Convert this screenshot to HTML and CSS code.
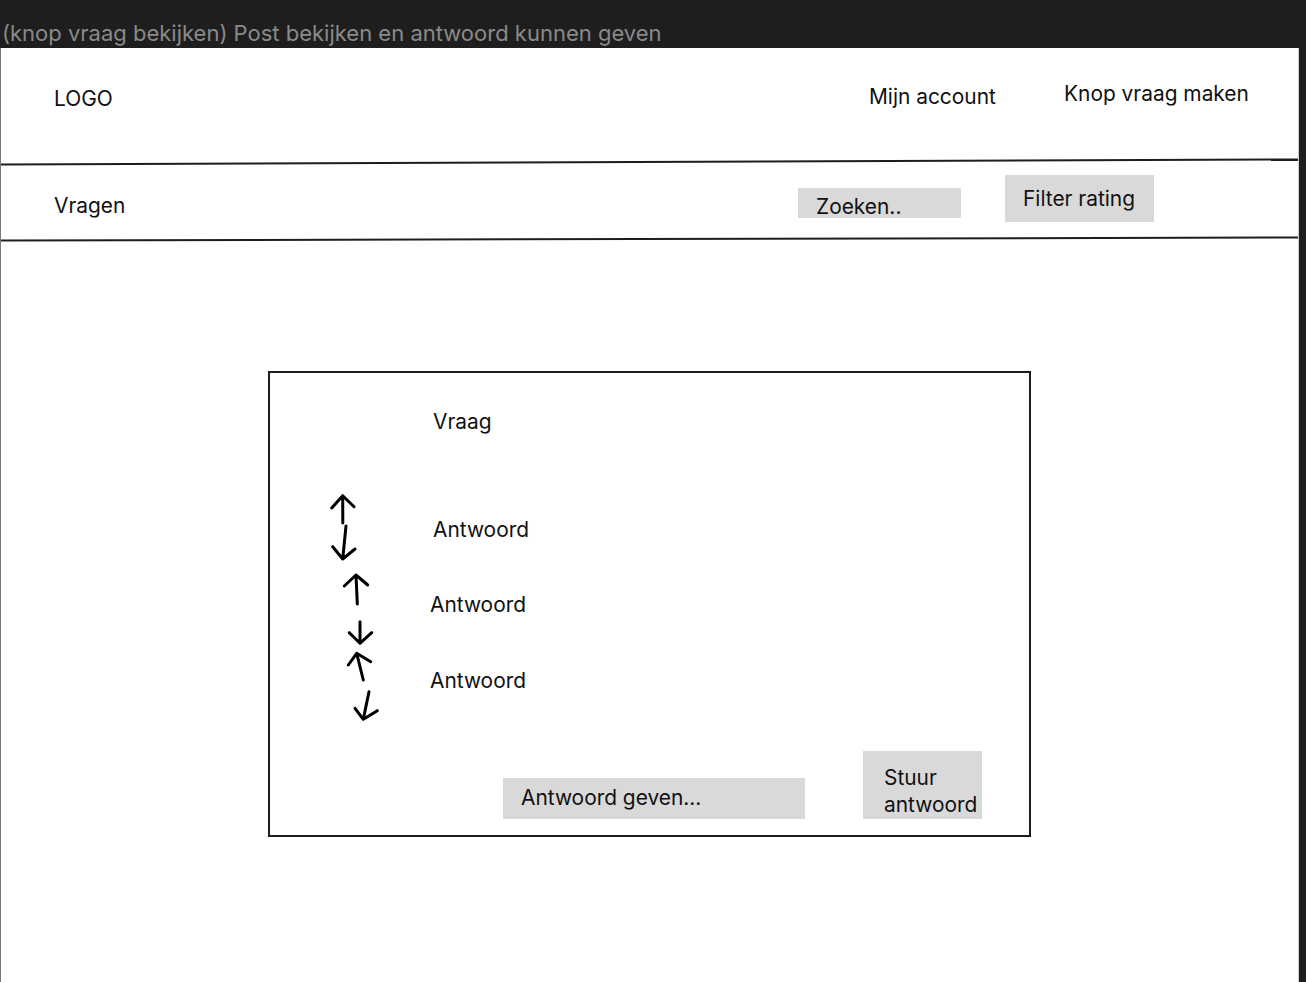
FILE: index.html
```html
<!DOCTYPE html>
<html lang="nl">
<head>
<meta charset="utf-8">
<title>Post bekijken</title>
<link rel="stylesheet" href="styles.css">
</head>
<body>
<div class="title">(knop vraag bekijken) Post bekijken en antwoord kunnen geven</div>
<main class="frame">
  <header class="topbar">
    <div class="logo">LOGO</div>
    <div class="account">Mijn account</div>
    <div class="make">Knop vraag maken</div>
  </header>
  <div class="rule rule-one"></div>
  <nav class="subbar">
    <div class="section">Vragen</div>
    <div class="search">Zoeken..</div>
    <div class="filter">Filter rating</div>
  </nav>
  <div class="rule rule-two"></div>
  <section class="content">
    <article class="card">
      <svg class="arrows" width="200" height="400" viewBox="270 373 200 400" fill="none" stroke="#000" stroke-width="3" stroke-linecap="round" stroke-linejoin="round">
        <path d="M342.7 496 L342.8 523 M331.7 508 L342.7 495.7 L354 506.7"/>
        <path d="M346 526 L342.7 559 M332.7 546.7 L342.7 559 L355 549"/>
        <path d="M356 575 L357.3 604 M344.3 586 L356 575 L367.7 585"/>
        <path d="M360 621.7 L360 643.3 M349.3 632.7 L360 643.3 L371.7 632.7"/>
        <path d="M356.7 653.3 L363.3 680 M348.3 665 L356.7 653.3 L370.7 661.7"/>
        <path d="M369 691.7 L363.3 719.3 M355 708.3 L363.3 719.3 L377.3 710.7"/>
      </svg>
      <div class="question">Vraag</div>
      <ul class="answers">
        <li class="answer a1">Antwoord</li>
        <li class="answer a2">Antwoord</li>
        <li class="answer a3">Antwoord</li>
      </ul>
      <div class="reply">
        <div class="reply-input">Antwoord geven...</div>
        <div class="reply-send">Stuur<br>antwoord</div>
      </div>
    </article>
  </section>
</main>
</body>
</html>
```

FILE: styles.css
```css
html, body {
  margin: 0;
  padding: 0;
}

body {
  background: #1e1e1e;
  font-family: Inter, "Noto Sans", "Liberation Sans", sans-serif;
  font-size: 20.9px;
  line-height: 24px;
  color: #111;
  width: 1306px;
  height: 982px;
  overflow: hidden;
}

.title {
  height: 48px;
  box-sizing: border-box;
  padding: 21px 0 0 2px;
  color: #8a8a8a;
  font-size: 22px;
  line-height: 24px;
  white-space: nowrap;
}

.frame {
  width: 1299px;
  height: 934px;
  box-sizing: border-box;
  background: #fff;
  border-left: 1px solid #7a7a7a;
  border-right: 1px solid #d0d0d0;
  overflow: hidden;
}

.topbar {
  height: 113px;
  box-sizing: border-box;
  display: grid;
  grid-template-columns: 815px 195px auto;
  padding-left: 53px;
}

.logo {
  margin-top: 39px;
}

.account {
  margin-top: 37px;
}

.make {
  margin-top: 34px;
}

.rule {
  height: 2px;
  background: #1e1e1e;
  width: 1298px;
}

.rule-one {
  transform: rotate(-0.22deg);
}

.rule-two {
  transform: rotate(-0.13deg);
}

.subbar {
  height: 75px;
  box-sizing: border-box;
  display: grid;
  grid-template-columns: 744px 207px auto;
  align-items: start;
  padding-left: 53px;
}

.section {
  margin-top: 31px;
}

.search {
  margin-top: 25px;
  width: 163px;
  height: 30px;
  box-sizing: border-box;
  padding: 7px 0 0 18px;
  background: #d9d9d9;
}

.filter {
  margin-top: 12px;
  width: 149px;
  height: 47px;
  box-sizing: border-box;
  padding: 12px 0 0 18px;
  background: #d9d9d9;
}

.content {
  padding: 131px 0 0 267px;
}

.card {
  position: relative;
  width: 763px;
  height: 466px;
  box-sizing: border-box;
  border: 2px solid #1e1e1e;
  display: flex;
  flex-direction: column;
}

.arrows {
  position: absolute;
  left: 0;
  top: 0;
}

.question {
  margin: 37px 0 0 163px;
}

.answers {
  list-style: none;
  margin: 84px 0 0 0;
  padding: 0;
}

.answer {
  height: 24px;
}

.a1 {
  margin-left: 163px;
}

.a2 {
  margin: 51px 0 0 160px;
}

.a3 {
  margin: 52px 0 0 160px;
}

.reply {
  margin-top: auto;
  margin-bottom: 16px;
  display: flex;
  align-items: flex-end;
  padding-left: 233px;
  gap: 58px;
}

.reply-input {
  width: 302px;
  height: 41px;
  box-sizing: border-box;
  padding: 8px 0 0 18px;
  background: #d9d9d9;
}

.reply-send {
  width: 119px;
  height: 68px;
  box-sizing: border-box;
  padding: 13px 0 0 21px;
  line-height: 27px;
  background: #d9d9d9;
  white-space: nowrap;
}
```
